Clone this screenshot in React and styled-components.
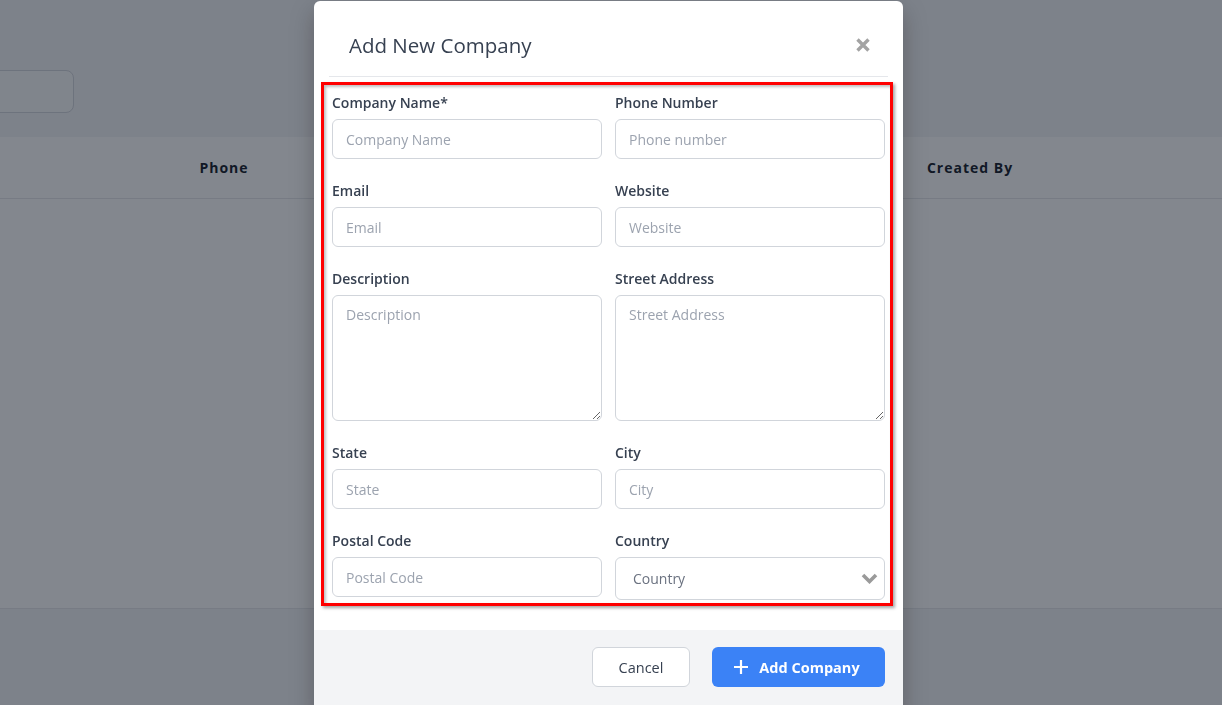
import React from "react";
import styled, { createGlobalStyle } from "styled-components";

const GlobalStyle = createGlobalStyle`
	* {
		box-sizing: border-box;
	}
	body {
		margin: 0;
		background: #f3f4f6;
		font-family: "Open Sans", "Noto Sans", sans-serif;
		overflow: hidden;
	}
`;

const fields = [
	[
		{ label: "Company Name*", placeholder: "Company Name" },
		{ label: "Phone Number", placeholder: "Phone number" },
	],
	[
		{ label: "Email", placeholder: "Email" },
		{ label: "Website", placeholder: "Website" },
	],
	[
		{ label: "Description", placeholder: "Description", area: true },
		{ label: "Street Address", placeholder: "Street Address", area: true },
	],
	[
		{ label: "State", placeholder: "State" },
		{ label: "City", placeholder: "City" },
	],
];

function Chevron() {
	return (
		<svg width="17" height="11" viewBox="0 0 17 11">
			<path
				d="M2 2 L8.5 8.5 L15 2"
				fill="none"
				stroke="#9a9a9a"
				strokeWidth="3.6"
				strokeLinejoin="miter"
			/>
		</svg>
	);
}

function CloseIcon() {
	return (
		<svg width="16" height="16" viewBox="0 0 16 16">
			<path
				d="M2.5 2.5 L13.5 13.5 M13.5 2.5 L2.5 13.5"
				stroke="#a3a3a3"
				strokeWidth="3.4"
			/>
		</svg>
	);
}

function PlusIcon() {
	return (
		<svg width="16" height="16" viewBox="0 0 16 16">
			<path d="M8 1 V15 M1 8 H15" stroke="#fff" strokeWidth="2.2" />
		</svg>
	);
}

function App() {
	return (
		<>
			<GlobalStyle />
			<Page>
				<Toolbar>
					<Search />
				</Toolbar>
				<Table>
					<HeadRow>
						<HeadCell />
						<HeadCell>Phone</HeadCell>
						<HeadCell>Email</HeadCell>
						<HeadCell>Website</HeadCell>
						<HeadCell>Created By</HeadCell>
						<HeadCell />
					</HeadRow>
				</Table>
			</Page>
			<Overlay>
				<Modal>
					<Header>
						<Title>Add New Company</Title>
						<CloseButton>
							<CloseIcon />
						</CloseButton>
					</Header>
					<Body>
						<Form>
							{fields.map((row) =>
								row.map((f) => (
									<Field key={f.label}>
										<Label>{f.label}</Label>
										{f.area ? (
											<TextArea placeholder={f.placeholder} />
										) : (
											<Input placeholder={f.placeholder} />
										)}
									</Field>
								))
							)}
							<Field>
								<Label>Postal Code</Label>
								<Input placeholder="Postal Code" />
							</Field>
							<Field>
								<Label>Country</Label>
								<SelectWrap>
									<Select defaultValue="">
										<option value="">Country</option>
									</Select>
									<SelectArrow>
										<Chevron />
									</SelectArrow>
								</SelectWrap>
							</Field>
						</Form>
					</Body>
					<Footer>
						<CancelButton>Cancel</CancelButton>
						<PrimaryButton>
							<PlusIcon />
							Add Company
						</PrimaryButton>
					</Footer>
				</Modal>
			</Overlay>
		</>
	);
}

export default App;

const Page = styled.div`
	height: 100vh;
	display: flex;
	flex-direction: column;
`;

const Toolbar = styled.div`
	height: 137px;
	padding-top: 70px;
`;

const Search = styled.div`
	width: 96px;
	height: 43px;
	margin-left: -22px;
	background: #f9fafb;
	border: 1px solid #d1d5db;
	border-radius: 8px;
`;

const Table = styled.div`
	height: 472px;
	background: #ffffff;
	border-bottom: 1px solid #e5e7eb;
`;

const HeadRow = styled.div`
	display: grid;
	grid-template-columns: 90px 268px 255px 255px 204px 150px;
	height: 62px;
	border-bottom: 1px solid #e5e7eb;
`;

const HeadCell = styled.div`
	display: flex;
	align-items: center;
	justify-content: center;
	font-size: 14px;
	font-weight: 700;
	letter-spacing: 1px;
	color: #111827;
`;

const Overlay = styled.div`
	position: fixed;
	inset: 0;
	background: rgba(17, 24, 39, 0.52);
`;

const Modal = styled.div`
	position: absolute;
	top: 1px;
	left: 314px;
	width: 589px;
	background: #ffffff;
	border-radius: 6px;
	box-shadow: 0 10px 25px rgba(0, 0, 0, 0.25);
	overflow: hidden;
`;

const Header = styled.div`
	display: flex;
	align-items: center;
	justify-content: space-between;
	height: 76px;
	margin: 0 15px;
	padding: 13px 20px 0 20px;
	border-bottom: 1px solid #e5e7eb;
`;

const Title = styled.h3`
	margin: 0;
	font-size: 20.5px;
	font-weight: 400;
	color: #374151;
`;

const CloseButton = styled.div`
	display: flex;
	margin-right: -3px;
`;

const Body = styled.div`
	padding: 5px 10px 24px 7px;
`;

const Form = styled.div`
	display: grid;
	grid-template-columns: 270px 270px;
	column-gap: 13px;
	row-gap: 22px;
	padding: 8px 5px 3px 8px;
	border: 3px solid #ff0000;
	box-shadow: 2px 2px 3px rgba(0, 0, 0, 0.35),
		inset 2px 2px 3px rgba(0, 0, 0, 0.25);
`;

const Field = styled.div`
	display: flex;
	flex-direction: column;
`;

const Label = styled.label`
	font-size: 14px;
	line-height: 20px;
	font-weight: 600;
	color: #374151;
	margin-bottom: 6px;
`;

const Input = styled.input`
	height: 40px;
	width: 100%;
	padding: 0 13px;
	font-family: inherit;
	font-size: 14px;
	color: #374151;
	border: 1px solid #d1d5db;
	border-radius: 6px;
	outline: none;

	&::placeholder {
		color: #9ca3af;
	}
`;

const TextArea = styled.textarea`
	height: 126px;
	width: 100%;
	padding: 9px 13px;
	font-family: inherit;
	font-size: 14px;
	line-height: 20px;
	color: #374151;
	border: 1px solid #d1d5db;
	border-radius: 6px;
	outline: none;

	&::placeholder {
		color: #9ca3af;
	}
`;

const SelectWrap = styled.div`
	position: relative;
`;

const Select = styled.select`
	appearance: none;
	height: 43px;
	width: 100%;
	padding: 0 17px;
	font-family: inherit;
	font-size: 14px;
	color: #6b7280;
	background: #ffffff;
	border: 1px solid #d1d5db;
	border-radius: 6px;
	outline: none;
`;

const SelectArrow = styled.span`
	position: absolute;
	right: 7px;
	top: 16px;
	display: flex;
	pointer-events: none;
`;

const Footer = styled.div`
	display: flex;
	justify-content: flex-end;
	gap: 22px;
	padding: 17px 18px 30px;
	background: #f3f4f6;
`;

const CancelButton = styled.button`
	height: 40px;
	width: 98px;
	font-family: inherit;
	font-size: 14.5px;
	font-weight: 500;
	color: #374151;
	background: #ffffff;
	border: 1px solid #d1d5db;
	border-radius: 6px;
`;

const PrimaryButton = styled.button`
	display: flex;
	align-items: center;
	justify-content: center;
	gap: 10px;
	height: 40px;
	width: 173px;
	padding-left: 2px;
	font-family: inherit;
	font-size: 14.5px;
	font-weight: 700;
	color: #ffffff;
	background: #3b82f6;
	border: none;
	border-radius: 6px;
`;
